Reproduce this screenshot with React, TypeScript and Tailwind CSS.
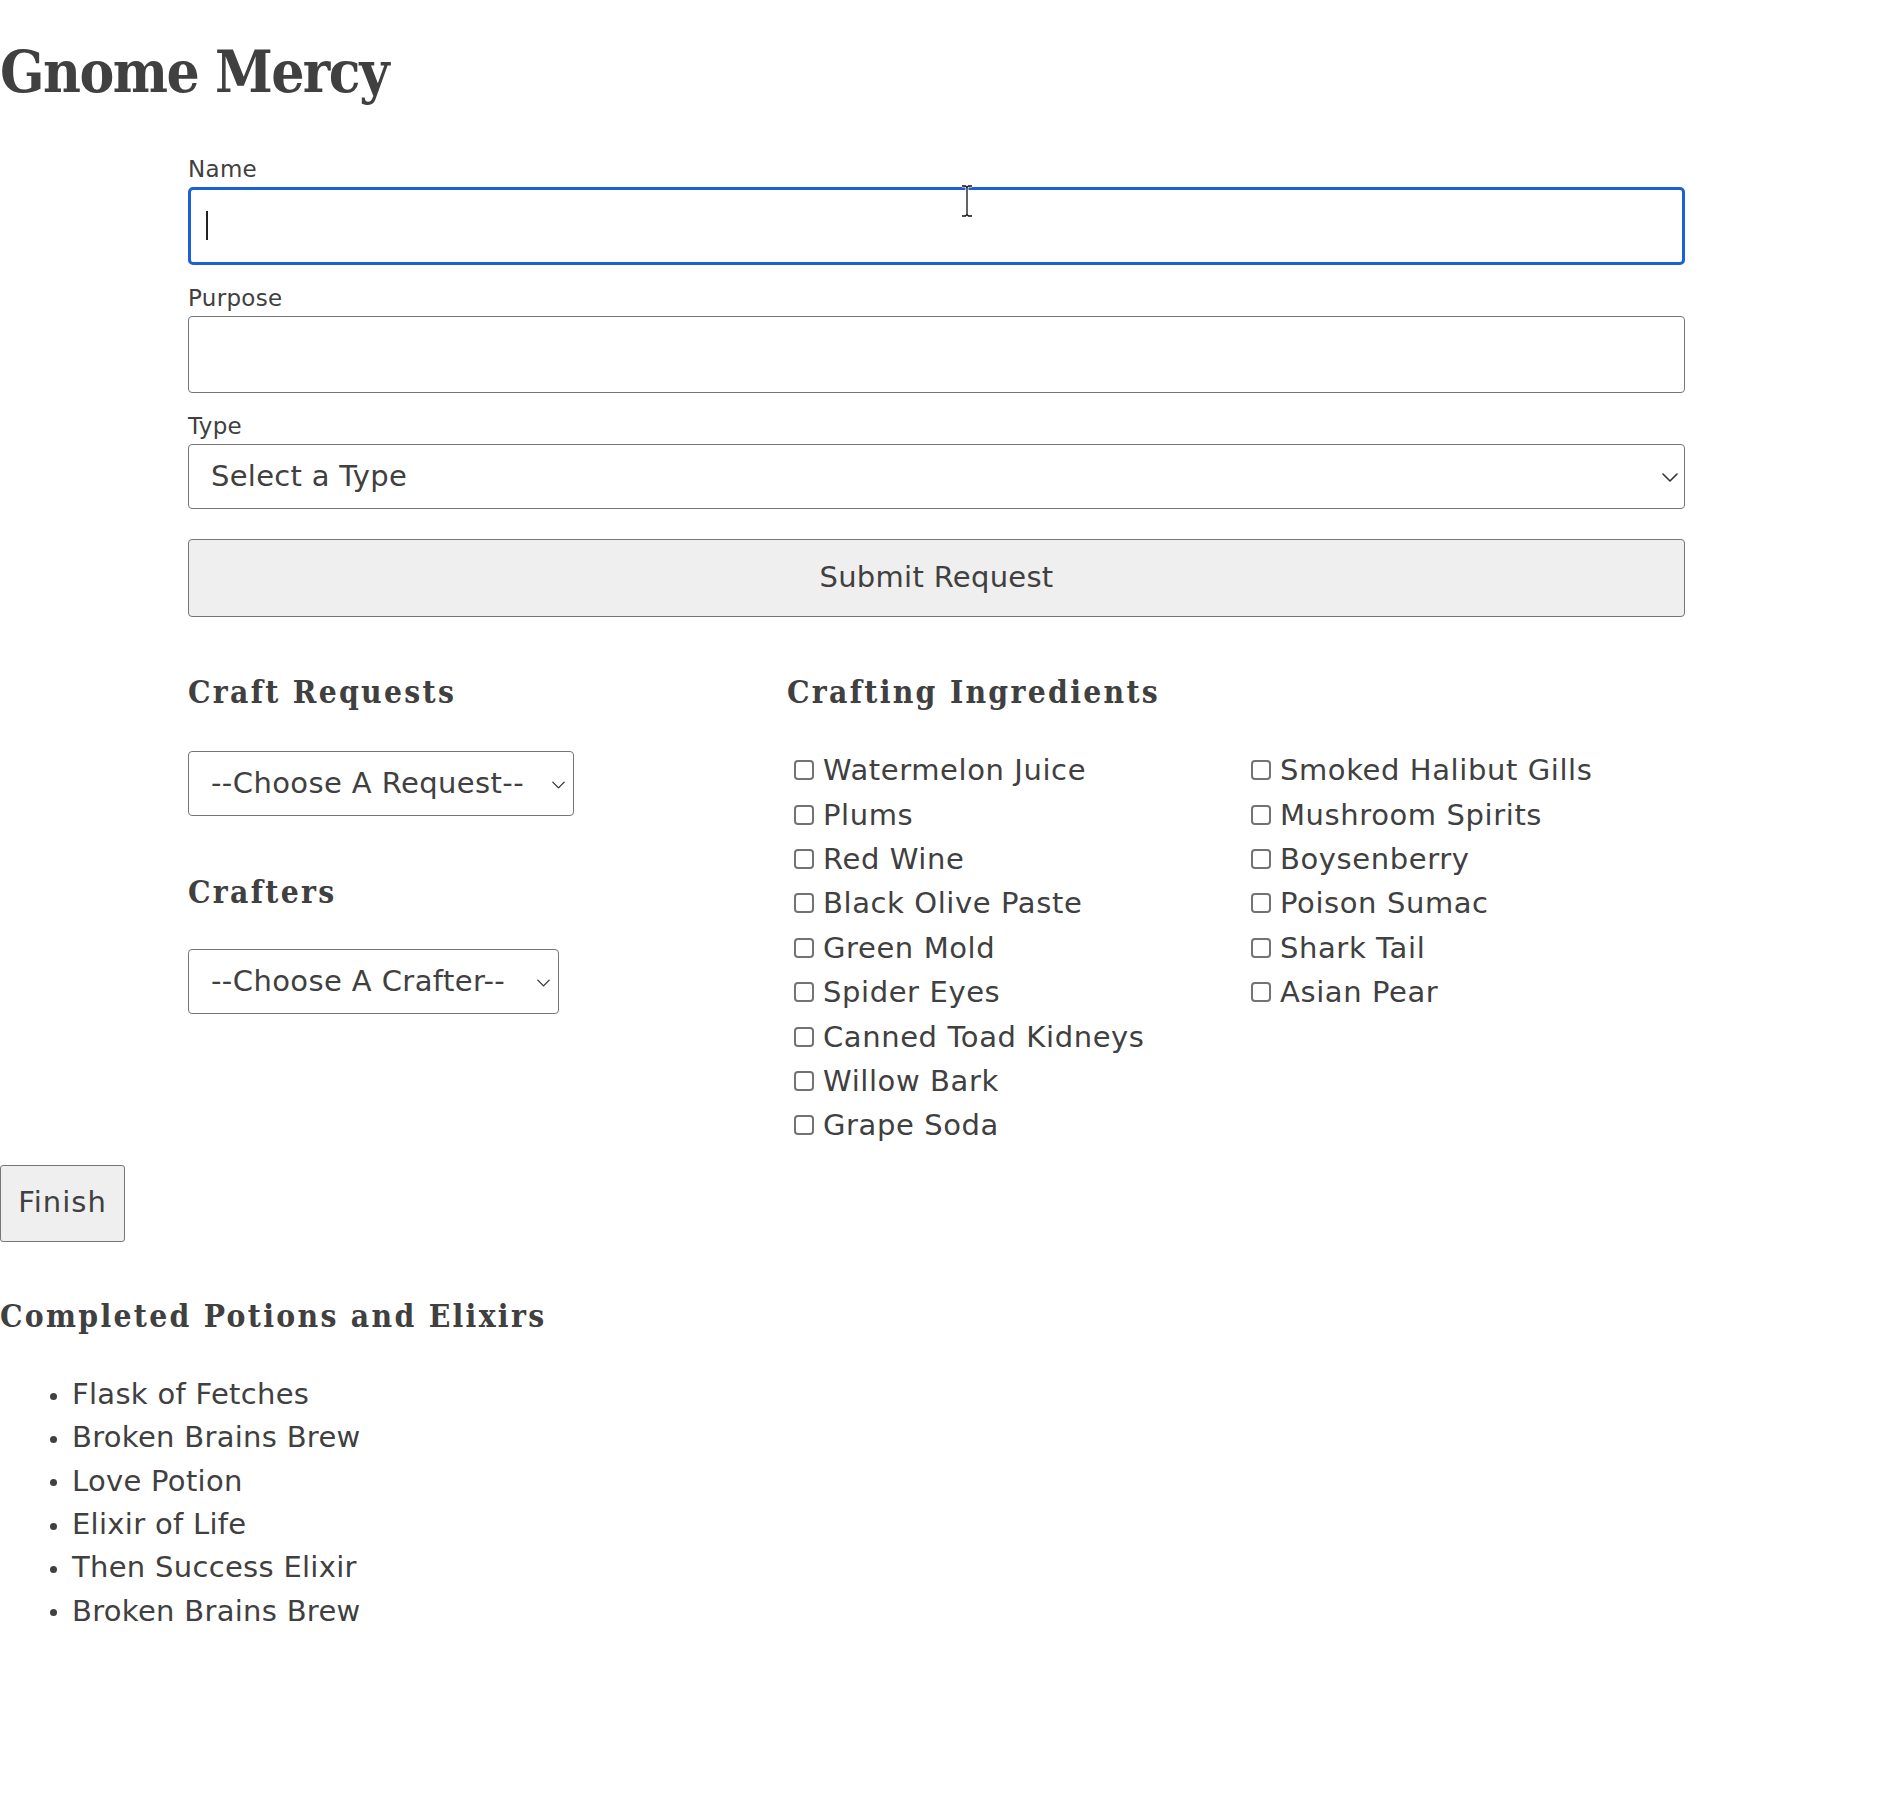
import React from 'react';

const leftIngredients = [
  'Watermelon Juice',
  'Plums',
  'Red Wine',
  'Black Olive Paste',
  'Green Mold',
  'Spider Eyes',
  'Canned Toad Kidneys',
  'Willow Bark',
  'Grape Soda',
];

const rightIngredients = [
  'Smoked Halibut Gills',
  'Mushroom Spirits',
  'Boysenberry',
  'Poison Sumac',
  'Shark Tail',
  'Asian Pear',
];

const potions = [
  'Flask of Fetches',
  'Broken Brains Brew',
  'Love Potion',
  'Elixir of Life',
  'Then Success Elixir',
  'Broken Brains Brew',
];

const headingFont =
  "font-['DejaVu_Serif_Condensed','DejaVu_Serif',serif] font-stretch-condensed font-bold";

function Chevron({ className }: { className: string }) {
  return (
    <svg viewBox="0 0 16 9" fill="none" className={className}>
      <path d="M1 1l7 7 7-7" stroke="#333" strokeWidth="1.6" strokeLinecap="round" strokeLinejoin="round" />
    </svg>
  );
}

function Ingredient({ label }: { label: string }) {
  return (
    <label className="flex items-center h-[44.4px]">
      <input
        type="checkbox"
        className="appearance-none ml-[7px] mr-[9px] w-[20px] h-[20px] shrink-0 border-2 border-[#737373] rounded-[4px] bg-white"
      />
      <span className="text-[29px] leading-[34px] tracking-[0.6px] whitespace-nowrap">{label}</span>
    </label>
  );
}

function SmallSelect({ width, placeholder }: { width: string; placeholder: string }) {
  return (
    <div className={`relative ${width}`}>
      <select className="appearance-none w-full h-[65px] border border-[#767676] rounded-[4px] bg-white pl-[22px] text-[29px] tracking-[0.4px] text-[#404040]">
        <option>{placeholder}</option>
      </select>
      <Chevron className="absolute right-[9px] top-[30px] w-[13px] h-[8px] pointer-events-none" />
    </div>
  );
}

export default function App() {
  return (
    <div className="relative w-[1882px] min-h-[1816px] bg-white text-[#404040] font-['DejaVu_Sans',sans-serif]">
      <h1 className={`${headingFont} pt-[43px] text-[58px] leading-[58px] tracking-[-1.5px]`}>Gnome Mercy</h1>

      {/* request form */}
      <form className="ml-[188px] w-[1497px] mt-[35px]">
        <div className="h-[51px] flex items-end pb-[6px] text-[23px] leading-[23px] tracking-[0.3px]">Name</div>
        <div className="relative">
          <input
            type="text"
            className="block w-full h-[78px] border-[3px] border-[#1d5fd5] rounded-[5px] outline-none bg-white"
          />
          <div className="absolute left-[18px] top-[24px] w-[2px] h-[29px] bg-[#222]" />
        </div>

        <div className="h-[51px] flex items-end pb-[6px] text-[23px] leading-[23px] tracking-[0.3px]">Purpose</div>
        <input
          type="text"
          className="block w-full h-[77px] border border-[#767676] rounded-[4px] bg-white"
        />

        <div className="h-[51px] flex items-end pb-[6px] text-[23px] leading-[23px] tracking-[0.3px]">Type</div>
        <div className="relative">
          <select className="appearance-none block w-full h-[65px] border border-[#767676] rounded-[4px] bg-white pl-[22px] text-[29px] tracking-[0.3px] text-[#404040]">
            <option>Select a Type</option>
          </select>
          <Chevron className="absolute right-[7px] top-[29px] w-[16px] h-[9px] pointer-events-none" />
        </div>

        <button
          type="button"
          className="block mt-[30px] w-full h-[78px] bg-[#efefef] border border-[#767676] rounded-[4px] text-[29px] tracking-[0.3px] text-[#404040]"
        >
          Submit Request
        </button>
      </form>

      {/* crafting area */}
      <div className="ml-[188px] w-[1497px] mt-[59px] flex">
        <div className="w-[599px]">
          <h2 className={`${headingFont} text-[31.5px] leading-[32px] tracking-[2.3px]`}>Craft Requests</h2>
          <div className="mt-[43px]">
            <SmallSelect width="w-[386px]" placeholder="--Choose A Request--" />
          </div>
          <h2 className={`${headingFont} mt-[60px] text-[31.5px] leading-[32px] tracking-[2.3px]`}>Crafters</h2>
          <div className="mt-[41px]">
            <SmallSelect width="w-[371px]" placeholder="--Choose A Crafter--" />
          </div>
        </div>

        <div className="flex-1">
          <h2 className={`${headingFont} text-[31.5px] leading-[32px] tracking-[2.3px]`}>Crafting Ingredients</h2>
          <div className="mt-[40px] grid grid-cols-[457px_1fr]">
            <div className="flex flex-col">
              {leftIngredients.map((name) => (
                <Ingredient key={name} label={name} />
              ))}
            </div>
            <div className="flex flex-col">
              {rightIngredients.map((name) => (
                <Ingredient key={name} label={name} />
              ))}
            </div>
          </div>
        </div>
      </div>

      <button
        type="button"
        className="block mt-[17px] w-[125px] h-[77px] bg-[#efefef] border border-[#767676] rounded-[3px] text-[29px] tracking-[1px] text-[#404040]"
      >
        Finish
      </button>

      {/* finished potions */}
      <h2 className={`${headingFont} mt-[58px] text-[31.5px] leading-[32px] tracking-[2.3px]`}>
        Completed Potions and Elixirs
      </h2>
      <ul className="mt-[41px]">
        {potions.map((p, i) => (
          <li key={i} className="flex items-center h-[43.3px]">
            <span className="ml-[50px] mr-[15px] mt-[4px] w-[7px] h-[7px] rounded-full bg-[#404040]" />
            <span className="text-[29px] leading-[34px] tracking-[0.3px]">{p}</span>
          </li>
        ))}
      </ul>

      {/* mouse pointer */}
      <svg viewBox="0 0 12 32" className="absolute left-[961px] top-[185px] w-[12px] h-[32px]">
        <path
          d="M1 1h3.5l1.5 1.5L7.5 1H11M6 2.5v27M1 31h3.5l1.5-1.5 1.5 1.5H11"
          stroke="#fff"
          strokeWidth="3"
          fill="none"
        />
        <path
          d="M1 1h3.5l1.5 1.5L7.5 1H11M6 2.5v27M1 31h3.5l1.5-1.5 1.5 1.5H11"
          stroke="#111"
          strokeWidth="1.3"
          fill="none"
        />
      </svg>
    </div>
  );
}
